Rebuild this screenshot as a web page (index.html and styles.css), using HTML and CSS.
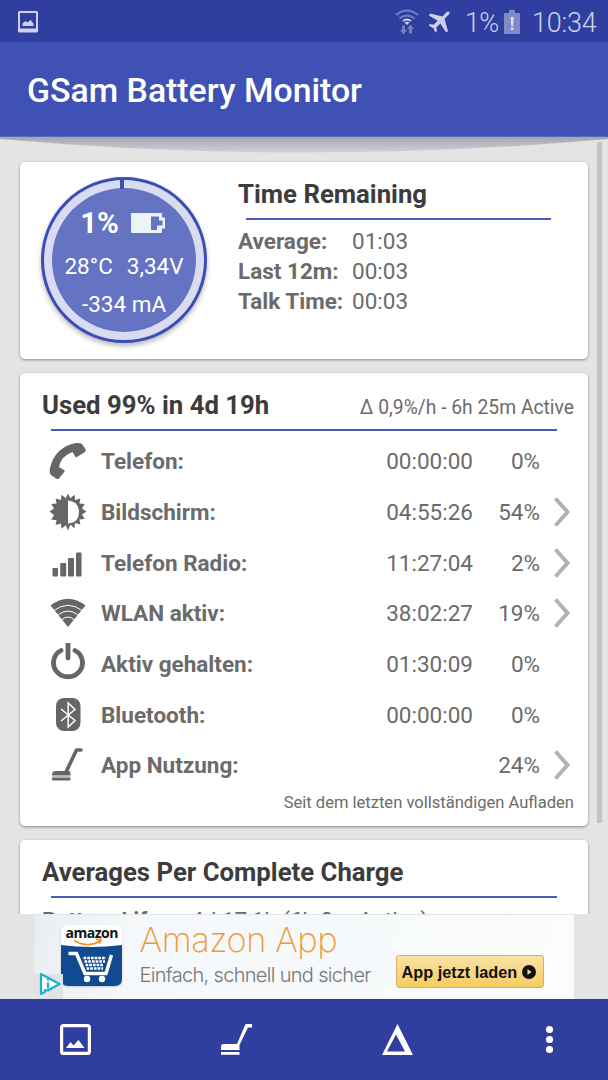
FILE: index.html
```html
<!DOCTYPE html>
<html lang="de">
<head>
<meta charset="utf-8">
<title>GSam Battery Monitor</title>
<link rel="stylesheet" href="styles.css">
</head>
<body>
<div class="screen">
  <div class="status-bar">
    <svg class="status-picture" width="20" height="22" viewBox="0 0 20 22"><path fill-rule="evenodd" d="M1.500 0h17Q20 0 20 1.500v18.500Q20 21.500 18.500 21.500h-17Q0 21.500 0 20V1.500Q0 0 1.500 0zM2 2v15.500h16V2z"/><path d="M4.500 15v-2.500l3-2.500 2 1.500 3-2.500 3 3.500V15z"/></svg>
    <svg class="status-wifi" width="24" height="26" viewBox="0 0 24 26"><g fill="none" stroke-width="2"><path stroke="#747fc2" d="M1 6q11-9 22 0M4.500 9.500q7.500-6 15 0"/><path stroke="#cdd1ee" d="M8 12q4-3 8 0"/></g><path fill="#cdd1ee" d="M9.500 13.500q2.500-1.500 5 0L12 16z"/><path fill="#747fc2" d="M7 16.500h3V21h2l-3.500 4.500L5 21h2zM14 24.500h3V20h2l-3.500-4.500L12 20h2z"/></svg>
    <svg class="status-plane" width="22" height="22" viewBox="0 0 22 22"><path d="M19 .8Q22-.6 21.300 3L16.500 7.700l3.500 12.500-2 1-5.700-8.800-4 4 .7 3.600-1.500 1.500-2.300-4.500L.6 14.500l1.500-1.500 3.600.7 4-4L1 4.500l1-2 12.500 3z"/></svg>
    <span class="status-percent">1%</span>
    <svg class="status-battery" width="16" height="24" viewBox="0 0 16 24"><path fill="#8189c7" d="M5 0h6v3h5v21H0V3h5z"/><path fill="#dfe2f5" d="M6.800 7h2.800l-.4 9H7.200zM7 17.500h2.300V20H7z"/></svg>
    <span class="status-time">10:34</span>
  </div>
  <header class="app-bar"><h1>GSam Battery Monitor</h1></header>
  <main class="content">
    <svg class="bar-shadow" width="608" height="18" viewBox="0 0 608 18"><defs><linearGradient id="shade" x1="0" y1="0" x2="0" y2="1"><stop offset="0" stop-color="#a5a6ab"/><stop offset="1" stop-color="#cfd0dc"/></linearGradient></defs><path fill="url(#shade)" d="M0 0h608v2Q304 29 0 2z"/></svg>
    <section class="card summary">
      <div class="gauge">
        <div class="gauge-face">
          <div class="gauge-level"><span>1%</span><svg width="34" height="20" viewBox="0 0 34 20"><path fill="#edf4f8" fill-rule="evenodd" d="M1 0h29q1 0 1 1v3.500h3v11h-3V19q0 1-1 1H1q-1 0-1-1V1Q0 0 1 0zM20 3.500v13.500h6v-4.500h5.500v-5H28v-4z"/></svg></div>
          <div class="gauge-pair"><span>28°C</span><span>3,34V</span></div>
          <div class="gauge-current">-334 mA</div>
        </div>
        <div class="gauge-tick"></div>
      </div>
      <div class="remaining">
        <h2>Time Remaining</h2>
        <dl>
          <dt>Average:</dt><dd>01:03</dd>
          <dt>Last 12m:</dt><dd>00:03</dd>
          <dt>Talk Time:</dt><dd>00:03</dd>
        </dl>
      </div>
    </section>

    <section class="card usage">
      <div class="usage-head"><h2>Used 99% in 4d 19h</h2><span class="rate">Δ 0,9%/h - 6h 25m Active</span></div>
      <div class="rule"></div>
      <div class="row">
        <svg class="icon" width="38" height="38" viewBox="0 0 38 38"><path d="M27 1q4-.5 6 1l4 6-1 2-8 5q-1 .6-1.800-.5L23.500 10Q12 14 10 25l5 3q1 .7.500 1.800L10 36.500q-1 1-2.500.3L2 33Q0 31 1 26 6 5 27 1z"/></svg>
        <span class="name">Telefon:</span><span class="time">00:00:00</span><span class="share">0%</span>
      </div>
      <div class="row">
        <svg class="icon" width="38" height="38" viewBox="0 0 38 38"><path fill-rule="evenodd" d="M19 .5l2.300 4.800L25.500 1.800l.6 5.300 5.300-1.600-1 5.100 5.300.3-2.700 4.600 4.500 3-4.500 3 2.700 4.600-5.300.3 1 5.100-5.300-1.600-.6 5.300-4.200-3.500L19 37.500l-2.300-5.200-4.200 3.500-.6-5.300-5.300 1.600 1-5.100-5.300-.3L5 22.100.5 18.500 5 15.500 2.300 10.900l5.300-.3-1-5.100 5.300 1.600.6-5.300 4.200 3.500zM19 7.500v23q11-1 11-11.500t-11-11.500z"/></svg>
        <span class="name">Bildschirm:</span><span class="time">04:55:26</span><span class="share">54%</span>
        <svg class="chevron" width="18" height="30" viewBox="0 0 18 30"><path d="M2.500 1.500L14.500 15 2.500 28.500"/></svg>
      </div>
      <div class="row">
        <svg class="icon" width="38" height="38" viewBox="0 0 38 38"><rect x="3.500" y="24" width="5.500" height="8.500" rx="1"/><rect x="11.200" y="19" width="6" height="13.500" rx="1"/><rect x="19" y="14" width="6" height="18.500" rx="1"/><rect x="27" y="8.500" width="5.500" height="24" rx="1"/></svg>
        <span class="name">Telefon Radio:</span><span class="time">11:27:04</span><span class="share">2%</span>
        <svg class="chevron" width="18" height="30" viewBox="0 0 18 30"><path d="M2.500 1.500L14.500 15 2.500 28.500"/></svg>
      </div>
      <div class="row">
        <svg class="icon" width="38" height="38" viewBox="0 0 38 38"><path d="M1.500 11.500Q19-2 36.500 11.500L19 33z"/><path fill="none" stroke="#fff" stroke-width="1" d="M5 16.500q14-10.500 28 0M9 21q10-8 20 0M12.500 26q6.500-6 13 0"/></svg>
        <span class="name">WLAN aktiv:</span><span class="time">38:02:27</span><span class="share">19%</span>
        <svg class="chevron" width="18" height="30" viewBox="0 0 18 30"><path d="M2.500 1.500L14.500 15 2.500 28.500"/></svg>
      </div>
      <div class="row">
        <svg class="icon power" width="38" height="38" viewBox="0 0 38 38"><g fill="none" stroke="#666" stroke-width="4.800" stroke-linecap="round"><path d="M12 7.500a14.500 14 0 1 0 14 0M19 1v14"/></g></svg>
        <span class="name">Aktiv gehalten:</span><span class="time">01:30:09</span><span class="share">0%</span>
      </div>
      <div class="row">
        <svg class="icon" width="38" height="38" viewBox="0 0 38 38"><rect x="7" y="2" width="24.500" height="33" rx="8"/><path fill="none" stroke="#fff" stroke-width="1.500" d="M12 13l14 11.500-6.800 6.500V7l6.800 6.500L12 25"/></svg>
        <span class="name">Bluetooth:</span><span class="time">00:00:00</span><span class="share">0%</span>
      </div>
      <div class="row">
        <svg class="icon" width="38" height="38" viewBox="0 0 38 38"><path fill="none" stroke="#666" stroke-width="3.600" stroke-linecap="round" stroke-linejoin="round" d="M32 4h-4.500L17.500 25"/><path d="M7 25h12.500q2 0 2 2v2.500H3V29q0-4 4-4zM3 31.500h18.500V33q0 1.500-1.500 1.500H4.500Q3 34.500 3 33z"/><path stroke="#b9b9c6" stroke-width="1.600" d="M3.500 30.500H21"/></svg>
        <span class="name">App Nutzung:</span><span class="time"></span><span class="share">24%</span>
        <svg class="chevron" width="18" height="30" viewBox="0 0 18 30"><path d="M2.500 1.500L14.500 15 2.500 28.500"/></svg>
      </div>
      <div class="since">Seit dem letzten vollständigen Aufladen</div>
    </section>

    <section class="card averages">
      <h2>Averages Per Complete Charge</h2>
      <div class="rule"></div>
      <div class="average"><b>Battery Life:</b><span>4d 17,1h (6h 0m Active)</span></div>
    </section>
    <div class="scrollbar"></div>
  </main>

  <aside class="ad-strip">
    <div class="ad">
      <div class="ad-logo">
        <span>amazon</span>
        <svg width="61" height="61" viewBox="0 0 61 61"><path fill="#124a91" d="M0 20q30 4 61 0v34q0 7-7 7H7q-7 0-7-7z"/><path fill="none" stroke="#f29325" stroke-width="1.700" d="M13 15.500q14 8 26 .5M35 14.500l5-.2-1.500 4.500"/><path fill="none" stroke="#fff" stroke-width="3.400" d="M7.500 28.500h8L24 48.500h21l5.500-18.500"/><path fill="none" stroke="#fff" stroke-width="2.400" stroke-dasharray="2.700 1" d="M22.500 33H45M23.500 36.500H44M24.500 40H43M25.500 43.500H42"/><circle cx="26" cy="54" r="3.200" fill="#fff"/><circle cx="41" cy="54" r="3.200" fill="#fff"/></svg>
      </div>
      <div class="ad-copy"><div class="ad-title">Amazon App</div><div class="ad-text">Einfach, schnell und sicher</div></div>
      <div class="ad-button"><span>App jetzt laden</span><svg width="14" height="14" viewBox="0 0 14 14"><circle cx="7" cy="7" r="7" fill="#111"/><path fill="#f9dc8d" d="M5.500 4l4 3-4 3z"/></svg></div>
      <div class="ad-choices"><svg width="24" height="24" viewBox="0 0 24 24"><path fill="#fff" stroke="#23b0cf" stroke-width="2.200" stroke-linejoin="round" d="M2 2v20l4-2.200V18l3 .5 11.500-6.500z"/><path stroke="#23b0cf" stroke-width="2.300" d="M9 10.500v6M9 6.500v2.200"/></svg></div>
    </div>
  </aside>

  <nav class="bottom-bar">
    <svg width="31" height="31" viewBox="0 0 31 31"><rect x="1.600" y="1.600" width="27.800" height="27.800" rx="2" fill="none" stroke="#fff" stroke-width="3.200"/><path fill="#fff" d="M6 24l4.500-6 3 3.500 5-5.500 6 8z"/></svg>
    <svg width="31" height="31" viewBox="0 0 31 31"><path fill="#fff" d="M24.500 0H31v3.500h-4L18.500 21v5H0v-3.500q0-2.500 2.500-2.500H16zM0 28h18.500v2.800H0z"/></svg>
    <svg width="31" height="31" viewBox="0 0 31 31"><path fill="#fff" fill-rule="evenodd" d="M15.500 0L31 31H0zM14 10.500L5 27.500h18z"/></svg>
    <svg width="12" height="31" viewBox="0 0 12 31"><g fill="#fff"><circle cx="6.500" cy="5.500" r="3.600"/><circle cx="6.500" cy="15.500" r="3.600"/><circle cx="6.500" cy="25.500" r="3.600"/></g></svg>
  </nav>
</div>
</body>
</html>
```
FILE: styles.css
```css
* { box-sizing: border-box; }

body {
  margin: 0;
  font-family: Roboto, "Liberation Sans", sans-serif;
  color: #6b6b6b;
}

h1, h2, dl, dd { margin: 0; }

.screen {
  width: 608px;
  height: 1080px;
  overflow: hidden;
  display: flex;
  flex-direction: column;
  background: #e4e4e4;
}

.status-bar {
  height: 42px;
  flex: none;
  display: flex;
  align-items: center;
  padding: 2px 10px 0 18px;
  background: #303e9f;
  color: #cdd1ee;
  font-size: 27px;
  font-weight: 300;
  line-height: 40px;
}

.status-bar svg { fill: #cdd1ee; flex: none; }
.status-wifi { margin-left: auto; }
.status-plane { margin-left: 9px; }
.status-percent { width: 36px; margin-left: 15px; letter-spacing: -0.7px; padding-top: 2px; }
.status-battery { margin-left: 3px; }
.status-time { width: 66px; margin-left: 12px; padding-top: 2px; white-space: nowrap; letter-spacing: -0.2px; }

.app-bar {
  height: 95px;
  flex: none;
  padding: 2px 27px 0;
  background: #4051b5;
  border-bottom: 1px solid #5a68ba;
}

.app-bar h1 {
  color: #fff;
  font-size: 33.800px;
  font-weight: 500;
  line-height: 94px;
}

.content {
  position: relative;
  height: 777px;
  flex: none;
  overflow: hidden;
  padding: 25px 20px 0;
}

.bar-shadow { position: absolute; top: 0; left: 0; }

.scrollbar {
  position: absolute;
  top: 5px;
  right: 6px;
  width: 5px;
  height: 681px;
  background: #c4c4c4;
}

.card {
  position: relative;
  margin-bottom: 14px;
  background: #fff;
  border-radius: 5px;
  box-shadow: 0 1px 3px rgba(0, 0, 0, 0.400);
}

.card h2 {
  color: #3c3c3c;
  font-size: 25.750px;
  font-weight: 700;
  line-height: 32px;
  white-space: nowrap;
}

.rule { height: 2px; background: #4c5cbc; margin: 0 31px 0 31px; }

.summary { display: flex; height: 197px; padding: 15px 22px 0 21px; }

.gauge {
  position: relative;
  width: 166px;
  height: 166px;
  flex: none;
  padding: 8px;
  border: 3px solid #3b4db6;
  border-radius: 50%;
  background: #d9dcf0;
  box-shadow: 0 3px 5px rgba(0, 0, 0, 0.280);
}

.gauge-face {
  height: 144px;
  border-radius: 50%;
  background: #6573c3;
  color: #fff;
  text-align: center;
  font-size: 22.500px;
  padding-top: 14px;
  white-space: nowrap;
}

.gauge-level {
  display: flex;
  align-items: center;
  justify-content: center;
  gap: 12px;
  height: 42px;
  padding-right: 3px;
  font-size: 29.500px;
  font-weight: 700;
}

.gauge-level svg { display: block; }
.gauge-pair { display: flex; justify-content: center; gap: 14px; height: 43px; line-height: 44px; }
.gauge-current { line-height: 34px; }

.gauge-tick {
  position: absolute;
  left: 76px;
  top: 0;
  width: 4px;
  height: 9px;
  background: #3b4db6;
}

.remaining { flex: 1; padding-left: 31px; }

.remaining h2 {
  position: relative;
  height: 43px;
  padding-top: 1px;
}

.remaining h2::after {
  content: "";
  position: absolute;
  left: 8px;
  right: 15px;
  bottom: 0;
  height: 2px;
  background: #4c5cbc;
}

.remaining dl {
  display: grid;
  grid-template-columns: 114px 1fr;
  margin-top: 6px;
  font-size: 22.500px;
  line-height: 30px;
}

dt, .name, .average b { font-weight: 700; white-space: nowrap; }

.usage { height: 453px; padding-top: 16px; }

.usage-head {
  display: flex;
  justify-content: space-between;
  align-items: center;
  height: 32px;
  margin-bottom: 8px;
  padding: 0 14px 0 22px;
}

.rate { font-size: 19.300px; padding-top: 4px; }

.usage .rule { margin-bottom: 5px; }

.row {
  display: grid;
  grid-template-columns: 38px 239.500px 147px 67px 7px 29px;
  align-items: center;
  height: 50.670px;
  padding-left: 28.500px;
  font-size: 22.500px;
}

.row .icon { display: block; fill: #666; }
.row .power { margin-top: -4px; }
.name { padding-left: 14.500px; }
.time, .share { text-align: right; }
.chevron { grid-column: 6; margin-left: 6px; fill: none; stroke: #b1b1b8; stroke-width: 4; }

.since { padding-right: 14px; text-align: right; font-size: 16.560px; line-height: 23px; }

.averages { height: 160px; padding-top: 16px; }
.averages h2 { padding-left: 22px; height: 40px; }

.average {
  display: grid;
  grid-template-columns: 149px 1fr;
  padding: 7px 0 0 22px;
  font-size: 22.500px;
  line-height: 30px;
}

.ad-strip {
  height: 85px;
  flex: none;
  display: flex;
  justify-content: center;
  padding-top: 1px;
}

.ad {
  position: relative;
  display: flex;
  width: 539px;
  height: 84px;
  background: linear-gradient(100deg, #e8eef2 0, #f4f8fb 18%, #f7fafb 65%, #fcfcfc 100%);
}

.ad-logo {
  position: relative;
  width: 61px;
  height: 61px;
  margin: 10px 0 0 26px;
  border-radius: 7px;
  background: #fff;
  box-shadow: 0 1px 2px #c4cbd1;
}

.ad-logo span {
  position: absolute;
  left: 5px;
  top: -1px;
  color: #111;
  font: 700 14px/18px "Open Sans", sans-serif;
  letter-spacing: -0.5px;
}

.ad-logo svg { display: block; }
.ad-copy { width: 256px; padding: 2px 0 0 18px; white-space: nowrap; }
.ad-title { color: #f19a35; font: 200 34.500px/46px Inter, sans-serif; letter-spacing: -0.5px; }
.ad-text { color: #777; font: 300 20px/24px Inter, sans-serif; letter-spacing: -0.680px; }

.ad-button {
  display: flex;
  align-items: center;
  gap: 5px;
  width: 148px;
  height: 33px;
  margin: 40px 0 0 18px;
  padding-left: 5px;
  border: 1px solid #d9ae62;
  border-radius: 3px;
  background: linear-gradient(#fae3a4, #f4cc61);
  color: #111;
  font: 700 16.300px/30px "Liberation Sans", sans-serif;
  white-space: nowrap;
}

.ad-choices {
  position: absolute;
  left: 0;
  bottom: 0;
  width: 28px;
  height: 25px;
  padding-left: 4px;
  background: #dfe3e5;
}

.ad-choices svg { display: block; margin-top: -2px; }

.bottom-bar {
  display: flex;
  flex: 1;
  gap: 130px;
  padding: 25px 0 0 60px;
  background: #303e9f;
}

.bottom-bar svg { flex: none; }
```
